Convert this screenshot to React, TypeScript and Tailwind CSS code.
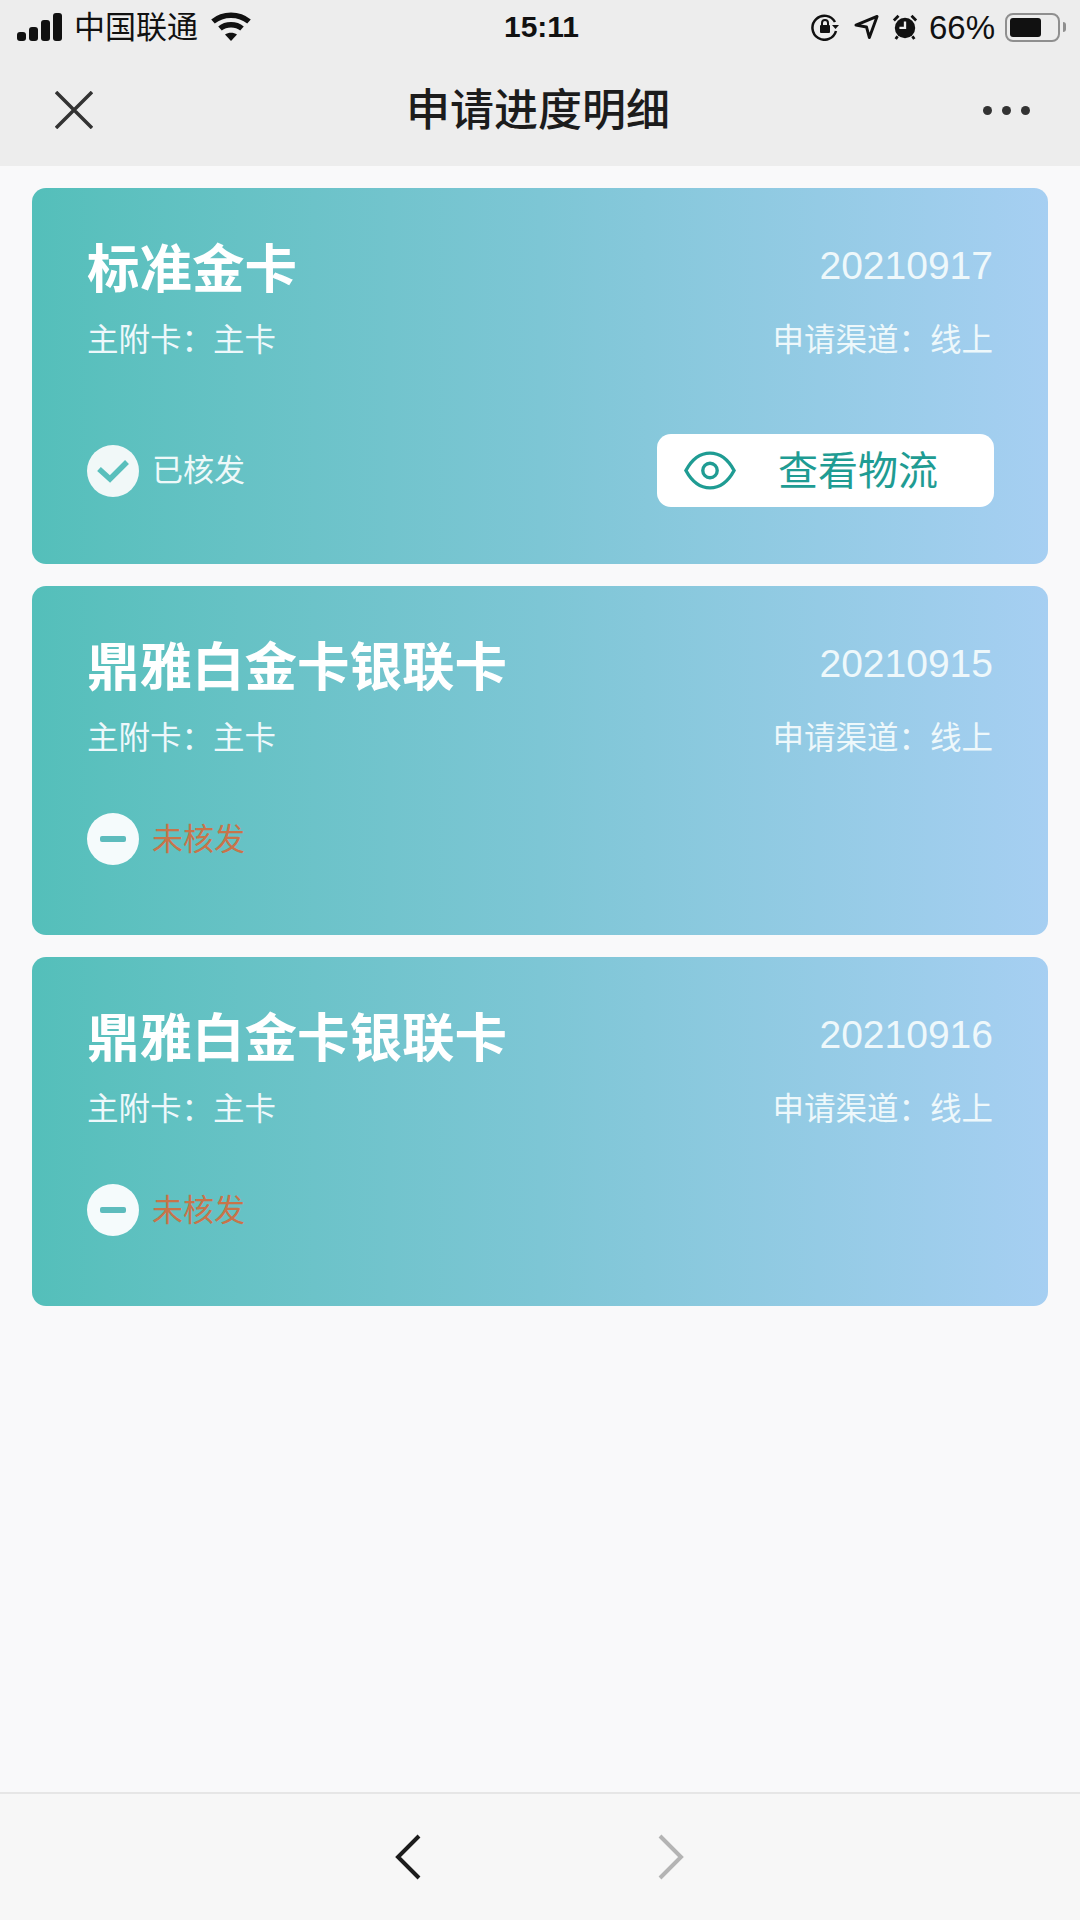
const FONT = "font-['Liberation_Sans','Noto_Sans_CJK_SC',sans-serif]";

const CARDS = [
  { id: 1, title: "标准金卡", date: "20210917", issued: true },
  { id: 2, title: "鼎雅白金卡银联卡", date: "20210915", issued: false },
  { id: 3, title: "鼎雅白金卡银联卡", date: "20210916", issued: false },
];

function StatusBar() {
  return (
    <div className="flex h-[54px] items-center justify-between pl-[17px] pr-[14px] text-[#111]">
      <div className="flex w-[300px] items-center">
        <div className="flex items-end gap-[3px]">
          <div className="h-[9px] w-[9px] rounded-[3px] bg-[#111]" />
          <div className="h-[14px] w-[9px] rounded-[3px] bg-[#111]" />
          <div className="h-[21px] w-[9px] rounded-[3px] bg-[#111]" />
          <div className="h-[28px] w-[9px] rounded-[3px] bg-[#111]" />
        </div>
        <span className="ml-[12px] text-[31px] leading-none">中国联通</span>
        <svg className="ml-[13px]" width="40" height="30" viewBox="0 0 40 30" fill="none" stroke="#111" strokeWidth="5.500">
          <path d="M2 9.500C12 1 28 1 38 9.500" />
          <path d="M9 16.500C15 11.500 25 11.500 31 16.500" />
          <path d="M20 29l-6-6.500c3.500-2.500 8.500-2.500 12 0z" fill="#111" stroke="none" />
        </svg>
      </div>
      <span className="text-[30px] font-semibold leading-none">15:11</span>
      <div className="flex w-[300px] items-center justify-end">
        <svg width="28" height="28" viewBox="0 0 28 28" fill="none" stroke="#111" strokeWidth="2.500">
          <path d="M24 9A12 12 0 1 0 25 18" />
          <path d="M21 12h7l-3.500 4z" fill="#111" stroke="none" />
          <rect x="9" y="12" width="10" height="8" rx="1" fill="#111" stroke="none" />
          <path d="M11 12V10a3 3 0 0 1 6 0v2" strokeWidth="2" />
        </svg>
        <svg className="ml-[15px]" width="25" height="26" viewBox="0 0 26 26" fill="none" stroke="#111" strokeWidth="3" strokeLinejoin="round">
          <path d="M2 11L24 2L16 24L13 13z" />
        </svg>
        <svg className="ml-[13px]" width="26" height="28" viewBox="0 0 28 28">
          <circle cx="14" cy="15" r="11" fill="#111" />
          <path d="M14 8v7H8" fill="none" stroke="#ededed" strokeWidth="2.500" />
          <path d="M2 7l5-5M26 7l-5-5M6 24l-2 3M22 24l2 3" stroke="#111" strokeWidth="3" />
        </svg>
        <span className="ml-[11px] text-[33px] leading-none">66%</span>
        <div className="ml-[10px] flex h-[29px] w-[55px] items-center rounded-[8px] border-[2px] border-[#8f8f8f] p-[3px]">
          <div className="h-[19px] w-[31px] rounded-[3px] bg-[#111]" />
        </div>
        <div className="ml-[3px] h-[10px] w-[3px] rounded-r-full bg-[#8f8f8f]" />
      </div>
    </div>
  );
}

function NavBar() {
  return (
    <div className="flex h-[112px] items-center justify-between pl-[55px] pr-[50px]">
      <svg width="38" height="38" viewBox="0 0 38 38" stroke="#333" strokeWidth="3.500" fill="none">
        <path d="M1 1l36 36M37 1L1 37" />
      </svg>
      <h1 className="mt-[2px] text-[44px] font-medium leading-none text-[#1c1c1c]">申请进度明细</h1>
      <div className="flex gap-[10px]">
        <div className="size-[9px] rounded-full bg-[#333]" />
        <div className="size-[9px] rounded-full bg-[#333]" />
        <div className="size-[9px] rounded-full bg-[#333]" />
      </div>
    </div>
  );
}

function CheckBadge() {
  return (
    <div className="flex size-[52px] items-center justify-center rounded-full bg-[#f1f8f8]">
      <svg width="34" height="26" viewBox="0 0 34 26" fill="none" stroke="#59bfbc" strokeWidth="5.500">
        <path d="M3 11l11 10L31 4" />
      </svg>
    </div>
  );
}

function MinusBadge() {
  return (
    <div className="flex size-[52px] items-center justify-center rounded-full bg-[#f5fbfc]">
      <div className="h-[6px] w-[26px] rounded-[2px] bg-[#5dbcbd]" />
    </div>
  );
}

function EyeIcon() {
  return (
    <svg width="52" height="39" viewBox="0 0 54 40" fill="none" stroke="#1f9c93" strokeWidth="3.500">
      <path d="M2 20C9 7 18 2 27 2s18 5 25 18c-7 13-16 18-25 18S9 33 2 20z" />
      <circle cx="27" cy="20" r="7.500" />
    </svg>
  );
}

function ProgressCard({ title, date, issued }: { title: string; date: string; issued: boolean }) {
  return (
    <article
      className={`flex flex-col rounded-[14px] bg-gradient-to-r from-[#54bfba] via-[#7dc6d5] to-[#a6cff2] pl-[55px] pr-[55px] pt-[52px] text-white ${
        issued ? "h-[376px]" : "h-[349px]"
      }`}
    >
      <div className="flex h-[60px] items-center justify-between">
        <h2 className="text-[52.500px] font-bold leading-none">{title}</h2>
        <span className="-mt-[10px] text-[39px] leading-none text-[#eef8fb]">{date}</span>
      </div>
      <div className="mt-[20px] flex items-center justify-between text-[31.500px] leading-[40px] text-[#eef8fb]">
        <span>主附卡：主卡</span>
        <span>申请渠道：线上</span>
      </div>
      <div className={`flex items-center justify-between ${issued ? "mt-[74px]" : "mt-[55px]"}`}>
        <div className="flex items-center gap-[13px]">
          {issued ? <CheckBadge /> : <MinusBadge />}
          <span className={`text-[31px] leading-none ${issued ? "text-[#eef9f9]" : "text-[#c8744a]"}`}>
            {issued ? "已核发" : "未核发"}
          </span>
        </div>
        {issued && (
          <button className="-mr-[1px] flex h-[73px] w-[337px] items-center rounded-[14px] bg-white pl-[27px]">
            <EyeIcon />
            <span className="ml-[42px] text-[40px] leading-none text-[#1f9c93]">查看物流</span>
          </button>
        )}
      </div>
    </article>
  );
}

export default function App() {
  return (
    <div className={`flex h-[1920px] w-[1080px] flex-col overflow-hidden bg-[#f9f9fa] ${FONT}`}>
      <header className="h-[166px] bg-[#ededed]">
        <StatusBar />
        <NavBar />
      </header>
      <main className="flex flex-1 flex-col gap-[22px] px-[32px] pt-[22px]">
        {CARDS.map((c) => (
          <ProgressCard key={c.id} title={c.title} date={c.date} issued={c.issued} />
        ))}
      </main>
      <footer className="flex h-[128px] items-center justify-center gap-[237px] border-t-[2px] border-[#e6e6e6] bg-[#f7f7f7] pr-[2px]">
        <svg width="26" height="46" viewBox="0 0 26 46" fill="none" stroke="#1c1c1c" strokeWidth="4">
          <path d="M24 2L3 23l21 21" />
        </svg>
        <svg width="26" height="46" viewBox="0 0 26 46" fill="none" stroke="#b4b4b4" strokeWidth="4">
          <path d="M2 2l21 21L2 44" />
        </svg>
      </footer>
    </div>
  );
}
